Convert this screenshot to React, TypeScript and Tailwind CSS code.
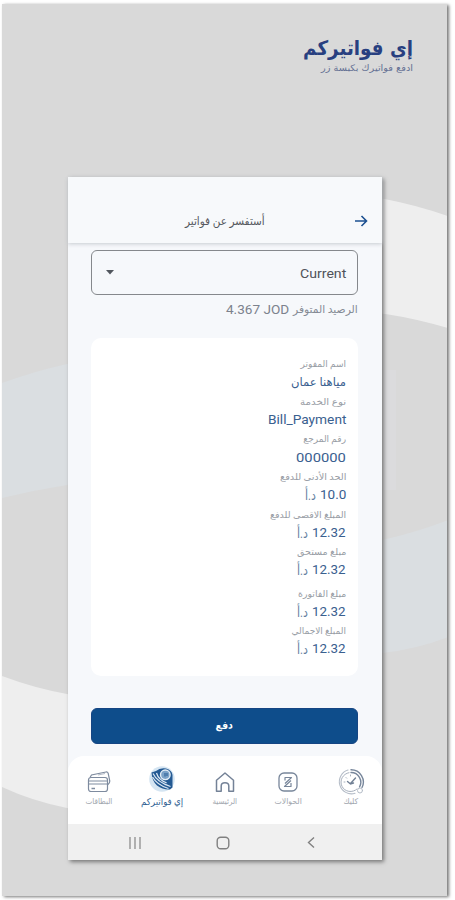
import { useLayoutEffect, useRef, useState } from "react";
import type { ReactNode } from "react";

const ORIGIN = { right: "right center", center: "center", left: "left center" };

// Renders one line of text condensed or widened to an exact width.
function Fit({
  width,
  className = "",
  align = "right",
  dir = "rtl",
  children,
}: {
  width: number;
  className?: string;
  align?: "right" | "center" | "left";
  dir?: "rtl" | "ltr";
  children: ReactNode;
}) {
  const ref = useRef<HTMLSpanElement>(null);
  const [scale, setScale] = useState(1);
  useLayoutEffect(() => {
    if (ref.current) setScale(width / ref.current.offsetWidth);
  }, [width]);
  return (
    <span
      className={`flex items-center ${align === "center" ? "justify-center" : "justify-start"}`}
      style={{ width }}
      dir="rtl"
    >
      <span
        ref={ref}
        dir={dir}
        className={`shrink-0 whitespace-nowrap ${className}`}
        style={{ transform: `scaleX(${scale})`, transformOrigin: ORIGIN[align] }}
      >
        {children}
      </span>
    </span>
  );
}

const rows = [
  { label: "اسم المفوتر", lw: 45, value: "مياهنا عمان", vw: 55, arabic: true },
  { label: "نوع الخدمة", lw: 46, value: "Bill_Payment", vw: 78 },
  { label: "رقم المرجع", lw: 43, value: "000000", vw: 50, low: true },
  { label: "الحد الأدنى للدفع", lw: 66, value: "10.0", vw: 26, unit: true },
  { label: "المبلغ الاقصى للدفع", lw: 76, value: "12.32", vw: 34, unit: true },
  { label: "مبلغ مستحق", lw: 49, value: "12.32", vw: 34, unit: true },
  { label: "مبلغ الفاتورة", lw: 48, value: "12.32", vw: 34, unit: true, gap: true },
  { label: "المبلغ الاجمالي", lw: 55, value: "12.32", vw: 34, unit: true },
];

function CardsIcon() {
  return (
    <svg width="26" height="26" viewBox="0 0 26 26" fill="none" stroke="#7e8b9f" strokeWidth="1.2">
      <path d="M4 8.500 5.500 6 20 3Q22 2.700 22.300 5L23.800 12Q24 14 21.500 16" />
      <path d="M12 6 19 4.500" stroke="#b4bcc8" />
      <rect x="2.500" y="8.500" width="19" height="14" rx="2.500" />
      <path d="M2.500 12h19M2.500 15h19" />
      <path d="M5.500 19.500h3.500" strokeWidth="1.500" />
    </svg>
  );
}

function BillsIcon() {
  return (
    <svg width="26" height="28" viewBox="0 0 26 28" fill="none">
      <circle cx="13" cy="14" r="12.800" fill="#d5e5f2" />
      <path d="M2.500 7.500 7 6Q11 2.500 17 3.500Q23 5 23.500 10V22.500L21 24.500Q14 25 8 20.500Q3 16 2.500 7.500Z" fill="#245a93" />
      <path d="M3.500 12Q8 20 19.500 23.500M4 8.500Q8 17 21.500 21.500M7.500 8Q9.500 15 18 18" stroke="#dce8f4" strokeWidth="1.200" />
      <circle cx="16.300" cy="9.800" r="4.800" fill="#7ba2c8" stroke="#e3edf6" strokeWidth="1.400" />
      <path d="M16 8v3.500M18 8v3M20 15l-2.500 3.500" stroke="#245a93" />
    </svg>
  );
}

function HomeIcon() {
  return (
    <svg width="22" height="24" viewBox="0 0 22 24" fill="none" stroke="#748297" strokeWidth="1.500" strokeLinejoin="round">
      <path d="M2.500 10.200 11 3l8.500 7.200V21.200h-4.700v-5.200q0-3.200-3.800-3.200t-3.800 3.200v5.200H2.500Z" />
    </svg>
  );
}

function TransferIcon() {
  return (
    <svg width="22" height="22" viewBox="0 0 22 22" fill="none" stroke="#78869a" strokeWidth="1.300" strokeLinejoin="round">
      <rect x="2" y="2" width="18" height="18" rx="5" />
      <path d="M8 9.500V6.500h6.500L8 12.500M14 12v3.500H7.500l6.500-6" strokeWidth="1.200" />
    </svg>
  );
}

function GaugeIcon() {
  return (
    <svg width="28" height="28" viewBox="0 0 28 28" fill="none" strokeLinecap="round">
      <path d="M14 1.800A12.200 12.200 0 0 1 25 19.500M14 4.500A9.700 9.700 0 0 1 22.500 19" stroke="#77869b" strokeWidth="1.400" />
      <circle cx="23" cy="22.500" r="2.500" stroke="#b5bdc8" />
      <path d="M11 2A12 12 0 1 0 18 25.300" stroke="#b5bdc8" strokeWidth="1.100" />
      <path d="M12 4.700A9.500 9.500 0 1 0 20 21" stroke="#a7b0bd" />
      <path d="m13.500 15.500 5-5.500M10.500 13.500l3 2.500 3-1" stroke="#718095" strokeWidth="1.400" />
      <path d="M13.500 7v1M7 14h1M9 9.500l.7.700" stroke="#a9b2bf" />
    </svg>
  );
}

const tabs = [
  { name: "البطاقات", w: 27, icon: <CardsIcon /> },
  { name: "إي فواتيركم", w: 42, icon: <BillsIcon />, active: true },
  { name: "الرئيسية", w: 25, icon: <HomeIcon /> },
  { name: "الحوالات", w: 27, icon: <TransferIcon /> },
  { name: "كليك", w: 15, icon: <GaugeIcon /> },
];

export default function App() {
  return (
    <div className="h-[900px] w-[455px] overflow-hidden bg-white pl-[2px] pt-[4px] font-['Roboto','DejaVu_Sans',sans-serif]">
      <main className="relative h-[892px] w-[445px] bg-[#d9d9d9] shadow-[2px_1px_3px_#777]">
        <svg className="absolute inset-0" width="445" height="892" viewBox="2 4 445 892">
          <path d="M330 193Q383 194 448 216V328Q383 309 330 310Z" fill="#eeeeee" />
          <path d="M2 383Q35 371 67 364L100 360V480L67 485Q35 490 2 498Z" fill="#dadee1" />
          <path d="M382 370h14v120h-14Z" fill="#dbdbdd" />
          <path d="M350 548 382 540Q417 532 448 520V637Q417 649 382 653H350Z" fill="#dadee1" />
          <path d="M2 676Q34 688 67 694L100 700V812L67 808Q32 801 2 787Z" fill="#eeeeee" />
        </svg>

        <div className="relative flex h-[173px] flex-col items-end pr-[34px] pt-[31px]">
          <Fit width={110} className="font-['DejaVu_Sans',sans-serif] text-[20px] font-bold leading-[27px] text-[#283f80]">إي فواتيركم</Fit>
          <Fit width={92} className="font-['DejaVu_Sans',sans-serif] text-[9px] leading-[12px] text-[#657194]">ادفع فواتيرك بكبسة زر</Fit>
        </div>

        <section className="relative ml-[66px] flex h-[683px] w-[314px] flex-col bg-[#f6f8fb] shadow-[2px_2px_4px_#777]">
          <header className="relative flex h-[66px] shrink-0 items-center bg-[#f7f9fb] pt-[23px] shadow-[0_1px_4px_#c7cbd0]">
            <div className="flex w-[314px] justify-center">
              <Fit width={80} align="center" className="text-[11.5px] text-[#55585e]">أستفسر عن فواتير</Fit>
            </div>
            <svg className="absolute right-[14px] top-[37px]" width="14" height="14" viewBox="0 0 14 14" fill="none" stroke="#1c5091" strokeWidth="1.600">
              <path d="M1 7h11M7.500 2l5 5-5 5" />
            </svg>
          </header>

          <div className="flex flex-col pl-[23px] pr-[24px] pt-[7px]">
            <div className="flex h-[45px] w-[267px] items-center justify-between rounded-[6px] border border-[#85888c] pl-[14px] pr-[11px]">
              <svg width="8" height="5" viewBox="0 0 8 5"><path d="M0 0h8L4 4.500Z" fill="#51565e" /></svg>
              <Fit width={46} className="pt-px text-[13.5px] text-[#50535a]">Current</Fit>
            </div>
            <div className="mt-[6px] flex h-[18px] w-[267px] items-center justify-end gap-[4px] text-[#858b95]">
              <Fit width={63} dir="ltr" className="text-[12.5px] text-[#7c828d]">4.367 JOD</Fit>
              <Fit width={65} className="text-[11px]">الرصيد المتوفر</Fit>
            </div>
            <div className="mt-[19px] flex h-[338px] w-[267px] flex-col items-end rounded-[10px] bg-white pr-[12px] pt-[17px]">
              {rows.map((r) => (
                <div key={r.label} className={`flex h-[37.700px] shrink-0 flex-col items-end ${r.gap ? "mt-[3.500px]" : ""}`}>
                  <div className="flex h-[18px] items-center">
                    <Fit width={r.lw} className="text-[9px] leading-[18px] text-[#989da5]">{r.label}</Fit>
                  </div>
                  <div className={`flex h-[18px] items-center gap-[4px] text-[#3a608f] ${r.low ? "translate-y-px" : ""}`}>
                    {r.unit && <Fit width={11} className="text-[14px] leading-[18px] text-[#66819f]">د.أ</Fit>}
                    <Fit width={r.vw} className={r.arabic ? "text-[12px] leading-[18px]" : "text-[13px] leading-[18px]"}>{r.value}</Fit>
                  </div>
                </div>
              ))}
            </div>
            <button className="mt-[32px] flex h-[36px] w-[267px] items-center justify-center rounded-[6px] border border-[#164583] bg-[#0e4d8b]">
              <Fit width={17} align="center" className="text-[11px] font-bold text-white">دفع</Fit>
            </button>
          </div>

          <nav className="mt-[12px] flex h-[68px] shrink-0 rounded-t-[16px] bg-white pt-[8px]">
            {tabs.map((t) => (
              <div key={t.name} className="flex w-[62.800px] shrink-0 flex-col items-center">
                <div className={`flex h-[30px] items-center ${t.active ? "" : "translate-y-[3px]"}`}>{t.icon}</div>
                <div className="flex h-[16px] items-center">
                  <Fit width={t.w} align="center" className={t.active ? "text-[9.500px] leading-[16px] text-[#315f92]" : "text-[8px] leading-[16px] text-[#a1a6ae]"}>{t.name}</Fit>
                </div>
              </div>
            ))}
          </nav>

          <footer className="flex h-[36px] shrink-0 items-center gap-[74px] bg-[#f0f0f0] pl-[60px] pt-[2px]">
            <svg width="14" height="14" viewBox="0 0 14 14" stroke="#858585" strokeWidth="1.200"><path d="M2 1v12M7 1v12M12 1v12" /></svg>
            <svg width="14" height="14" viewBox="0 0 14 14" fill="none" stroke="#808080" strokeWidth="1.400"><rect x="1.200" y="1.200" width="11.600" height="11.600" rx="3.500" /></svg>
            <svg className="ml-[2px]" width="10" height="14" viewBox="0 0 10 14" fill="none" stroke="#808080" strokeWidth="1.400"><path d="M8 1.500 2.500 6.500 8 11.500" /></svg>
          </footer>
        </section>
      </main>
    </div>
  );
}
